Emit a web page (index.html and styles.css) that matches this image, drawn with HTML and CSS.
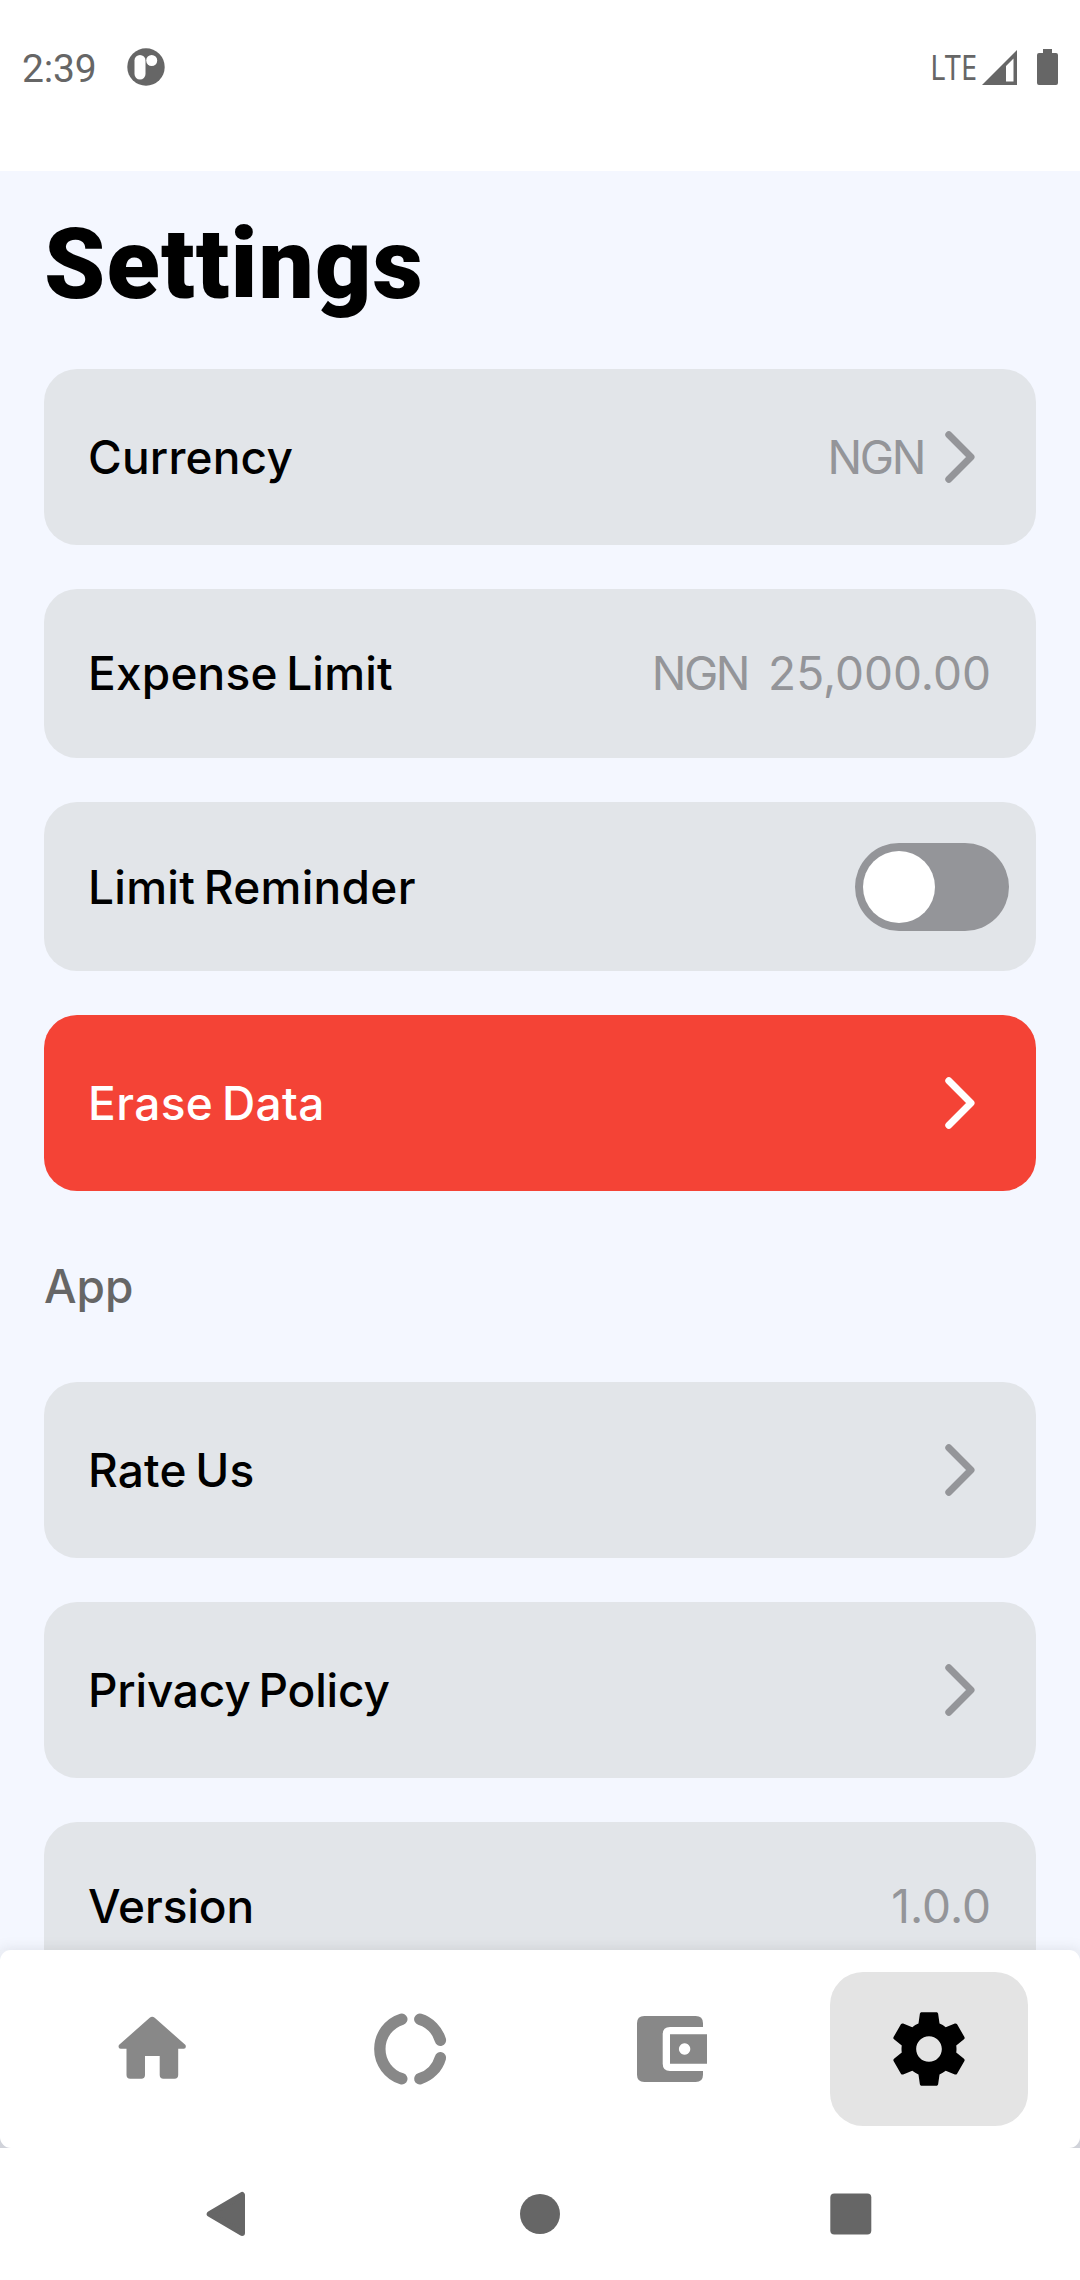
FILE: index.html
```html
<!DOCTYPE html>
<html lang="en">
<head>
<meta charset="utf-8">
<title>Settings</title>
<link rel="stylesheet" href="styles.css">
</head>
<body>
<svg class="defs" aria-hidden="true">
  <symbol id="chevron" viewBox="0 0 30 52"><path d="M3.8 3.8 26 26 3.8 48.2" fill="none" stroke="currentColor" stroke-width="7" stroke-linecap="round" stroke-linejoin="round"/></symbol>
</svg>
<div class="phone">
  <header class="status">
    <span class="clock">2:39</span>
    <svg class="notice" viewBox="0 0 38 38"><circle cx="19" cy="19" r="18.7" fill="#666"/><rect x="7.5" y="7" width="11" height="24.500" rx="5.500" fill="#fff"/><circle cx="24.700" cy="12.500" r="5.500" fill="#fff"/></svg>
    <span class="network">LTE</span>
    <svg class="signal" viewBox="0 0 36 36"><path fill="#666" fill-rule="evenodd" d="M0 35 35 0V35ZM24 31.500H31.500V8.500L24 16Z"/></svg>
    <svg class="battery" viewBox="0 0 21 36"><path fill="#666" d="M6 0h9v4h4q2 0 2 2v28q0 2-2 2H2q-2 0-2-2V6q0-2 2-2h4z"/></svg>
  </header>
  <main class="screen">
    <h1 class="title">Settings</h1>
    <section class="list">
      <div class="row tall"><span class="label currency">Currency</span><span class="value code">NGN</span><svg class="chevron"><use href="#chevron"/></svg></div>
      <div class="row"><span class="label">Expense Limit</span><span class="value code">NGN</span><span class="value amount">25,000.00</span></div>
      <div class="row toggle-row"><span class="label reminder">Limit Reminder</span><span class="toggle"><span class="thumb"></span></span></div>
      <div class="row tall danger"><span class="label erase">Erase Data</span><svg class="chevron"><use href="#chevron"/></svg></div>
    </section>
    <h2 class="group">App</h2>
    <section class="list">
      <div class="row tall"><span class="label">Rate Us</span><svg class="chevron"><use href="#chevron"/></svg></div>
      <div class="row tall"><span class="label privacy">Privacy Policy</span><svg class="chevron"><use href="#chevron"/></svg></div>
      <div class="row"><span class="label version">Version</span><span class="value number">1.0.0</span></div>
    </section>
  </main>
  <div class="dock">
    <nav class="tabs">
      <a class="tab"><svg viewBox="-1.2 0 88 88"><path fill="#888" d="M41.500 12.800Q44 10.500 46.500 12.800L77.300 40Q78.500 43.500 75.500 43.800H70V70Q70 73.700 66.300 73.700H55.200Q51.500 73.700 51.500 70V51H36.800V70Q36.800 73.700 33.100 73.700H22Q18.300 73.700 18.300 70V43.800H12.500Q9.500 43.500 10.700 40Z"/></svg></a>
      <a class="tab"><svg viewBox="-0.5 0 88 88"><g fill="none" stroke="#888" stroke-width="11.400" stroke-linecap="round"><path d="M35.300 14.200A31.200 31.200 0 0 0 35.300 73.800"/><path d="M53.300 14.200A31.200 31.200 0 0 1 73.900 35.200"/><path d="M53.300 73.800A31.200 31.200 0 0 0 73.900 52.800"/></g></svg></a>
      <a class="tab"><svg viewBox="0 0 88 88"><path fill="#888" fill-rule="evenodd" d="M18.300 11H69.600Q77 11 77 18.300V22H44Q36.700 22 36.700 29.300V58.700Q36.700 66 44 66H77V69.700Q77 77 69.600 77H18.300Q11 77 11 69.700V18.300Q11 11 18.300 11ZM44 29.300H81V58.700H44ZM58.600 38.300a5.700 5.700 0 1 0 .01 0Z"/></svg></a>
      <a class="tab active"><svg viewBox="0 0 24 24"><path d="M19.430 12.980c.04-.32.07-.64.07-.98s-.03-.66-.07-.98l2.110-1.650c.19-.15.24-.42.12-.64l-2-3.460c-.12-.22-.39-.3-.61-.22l-2.490 1c-.52-.4-1.080-.73-1.690-.98l-.38-2.650C14.460 2.180 14.250 2 14 2h-4c-.25 0-.46.18-.49.42l-.38 2.650c-.61.25-1.170.59-1.690.98l-2.490-1c-.23-.09-.49 0-.61.22l-2 3.460c-.13.22-.07.49.12.64l2.110 1.650c-.04.32-.07.65-.07.98s.03.66.07.98l-2.110 1.650c-.19.15-.24.42-.12.64l2 3.460c.12.22.39.3.61.22l2.490-1c.52.4 1.080.73 1.690.98l.38 2.650c.03.24.24.42.49.42h4c.25 0 .46-.18.49-.42l.38-2.650c.61-.25 1.170-.59 1.690-.98l2.490 1c.23.09.49 0 .61-.22l2-3.460c.12-.22.07-.49-.12-.64l-2.110-1.650zM12 15.500c-1.930 0-3.500-1.570-3.500-3.500s1.570-3.500 3.500-3.500 3.500 1.570 3.500 3.500-1.570 3.500-3.500 3.500z"/></svg></a>
    </nav>
  </div>
  <footer class="system">
    <svg class="back" viewBox="0 0 44 44"><path fill="#666" stroke="#666" stroke-width="6" stroke-linejoin="round" d="M2.700 22 35 3V41Z"/></svg>
    <svg viewBox="0 0 44 44"><circle cx="22" cy="22" r="20" fill="#666"/></svg>
    <svg viewBox="0 0 44 44"><rect x="1.300" y="1.500" width="41" height="41" rx="4" fill="#666"/></svg>
  </footer>
</div>
</body>
</html>
```
FILE: styles.css
```css
* { box-sizing: border-box; }
body { margin: 0; background: #fff; }
.defs { position: absolute; width: 0; height: 0; }
.phone { width: 1080px; height: 2280px; overflow: hidden; display: flex; flex-direction: column; background: #fff; font-family: Inter, "Noto Sans", sans-serif; }

.status { height: 171px; flex: none; display: flex; align-items: flex-start; padding: 48px 22px 0; color: #666; font-family: Roboto, sans-serif; }
.clock { width: 105px; font-size: 39px; line-height: 43px; letter-spacing: -.2px; }
.notice { width: 38px; height: 38px; }
.network { margin-left: auto; font: 34px/38px "Noto Sans", sans-serif; transform: scaleX(.85); transform-origin: right; }
.signal { width: 36px; height: 36px; margin: 2px 19px 0 5px; }
.battery { width: 21px; height: 36px; margin-top: 1px; }

.screen { height: 1779px; flex: none; overflow: hidden; background: #f4f7ff; padding: 37px 44px 0; }
.title { margin: 0; height: 161px; font: 900 98px/114px Roboto, sans-serif; letter-spacing: 1.1px; color: #000; }
.list { display: flex; flex-direction: column; gap: 44px; }
.row { height: 169px; flex: none; display: flex; align-items: center; padding: 0 45px 2px 44px; border-radius: 33px; background: #e2e5e9; }
.tall { height: 176px; padding: 0 61px 0 44px; }
.label { margin-right: auto; color: #000; font-size: 46px; font-weight: 500; letter-spacing: .2px; word-spacing: -4px; white-space: nowrap; }
.reminder { letter-spacing: .3px; }
.erase { letter-spacing: .4px; }
.privacy { letter-spacing: -.2px; }
.version { letter-spacing: -.1px; }
.value { color: #949599; font-size: 46px; }
.code { letter-spacing: -2.4px; }
.amount { margin-left: 20px; }
.chevron { width: 30px; height: 52px; color: #949599; margin-left: 21px; }
.danger { background: #f44336; }
.danger .label, .danger .chevron { color: #fff; }
.toggle-row { padding: 0 27px 0 44px; }
.toggle { width: 154px; height: 88px; border-radius: 44px; padding: 8px; background: #949599; }
.thumb { display: block; width: 72px; height: 72px; border-radius: 50%; background: #fff; }
.group { margin: 0; height: 191px; padding-top: 67px; font-size: 46px; line-height: 56px; font-weight: 500; color: #666; }

.dock { height: 198px; flex: none; background: linear-gradient(#eceff6, #d0d2d9); position: relative; box-shadow: 0 0 14px rgba(0, 0, 0, .1); }
.tabs { height: 198px; background: #fff; border-radius: 11px; display: flex; justify-content: space-between; padding: 22px 52px; }
.tab { width: 198px; height: 154px; border-radius: 33px; display: flex; align-items: center; justify-content: center; }
.tab svg { width: 88px; height: 88px; }
.active { background: #e4e4e4; }

.system { position: relative; height: 132px; flex: none; display: flex; justify-content: space-between; align-items: center; padding: 0 207px; background: #fff; }
.system svg { width: 44px; height: 44px; }
.system .back { overflow: visible; }
```
